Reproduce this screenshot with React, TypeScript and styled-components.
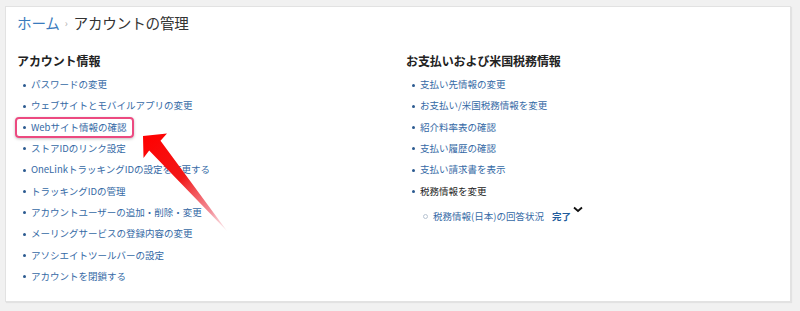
import React from "react";
import styled, { createGlobalStyle } from "styled-components";

const Global = createGlobalStyle`
  html, body { margin: 0; padding: 0; background: #f1f1f1; }
  body { font-family: "Noto Sans CJK JP", "Noto Sans", sans-serif; }
`;

const Page = styled.div`
  width: 800px;
  height: 311px;
  box-sizing: border-box;
  padding: 6px 9px 9px 5px;
`;

const Card = styled.div`
  position: relative;
  box-sizing: border-box;
  height: 296px;
  background: #fff;
  border: 1px solid #e2e2e2;
  box-shadow: 1px 1px 1px rgba(0, 0, 0, 0.06);
  padding: 6px 11px 0 11px;
`;

const Breadcrumb = styled.div`
  display: flex;
  align-items: center;
  height: 20px;
  font-size: 14.6px;
  line-height: 20px;
  letter-spacing: -0.2px;
`;

const Crumb = styled.span`
  color: #3a7bbd;
`;

const Sep = styled.span`
  color: #b0b0b0;
  font-size: 10px;
  margin: 0 6px 0 5px;
`;

const Title = styled.span`
  color: #333;
`;

const Columns = styled.div`
  display: grid;
  grid-template-columns: 389px 1fr;
  margin-top: 20px;
`;

const Column = styled.div`
  display: flex;
  flex-direction: column;
`;

const Heading = styled.h2`
  margin: 0 0 5px 0;
  font-size: 12px;
  line-height: 16px;
  font-weight: 700;
  color: #222;
  letter-spacing: -0.1px;
`;

const List = styled.ul`
  list-style: none;
  margin: 0;
  padding: 0;
`;

const Item = styled.li<{ $plain?: boolean }>`
  position: relative;
  display: flex;
  align-items: center;
  height: 21.33px;
  padding-left: 14px;
  font-size: 9.5px;
  line-height: 21.33px;
  color: ${(p) => (p.$plain ? "#222" : "#3469a5")};
  white-space: nowrap;
  &::before {
    content: "";
    position: absolute;
    left: 6px;
    top: 9.5px;
    width: 3px;
    height: 3px;
    border-radius: 50%;
    background: #2b5a90;
  }
`;

const SubList = styled.ul`
  list-style: none;
  margin: 3.7px 0 0 0;
  padding: 0;
`;

const SubItem = styled.li`
  position: relative;
  display: flex;
  align-items: center;
  height: 21.33px;
  padding-left: 27px;
  font-size: 9.5px;
  line-height: 21.33px;
  color: #3469a5;
  white-space: nowrap;
  &::before {
    content: "";
    position: absolute;
    left: 17px;
    top: 8.6px;
    width: 3px;
    height: 3px;
    border-radius: 50%;
    border: 0.8px solid #b8c4d2;
  }
`;

const Done = styled.span`
  font-weight: 700;
  color: #1f5c9c;
  margin-left: 8px;
`;

const Chevron = styled.svg`
  align-self: flex-start;
  margin-left: 2px;
`;

const Highlight = styled.span`
  position: absolute;
  left: -2px;
  top: 0px;
  width: 119px;
  height: 21px;
  box-sizing: border-box;
  border: 2px solid #ec4a80;
  border-radius: 4px;
  box-shadow: 0 1px 3px rgba(0, 0, 0, 0.25);
  pointer-events: none;
`;

const Arrow = styled.svg`
  position: absolute;
  left: 134px;
  top: 124px;
  overflow: visible;
  pointer-events: none;
`;

const leftItems = [
  "パスワードの変更",
  "ウェブサイトとモバイルアプリの変更",
  "Webサイト情報の確認",
  "ストアIDのリンク設定",
  "OneLinkトラッキングIDの設定を変更する",
  "トラッキングIDの管理",
  "アカウントユーザーの追加・削除・変更",
  "メーリングサービスの登録内容の変更",
  "アソシエイトツールバーの設定",
  "アカウントを閉鎖する",
];

const rightItems = [
  "支払い先情報の変更",
  "お支払い/米国税務情報を変更",
  "紹介料率表の確認",
  "支払い履歴の確認",
  "支払い請求書を表示",
];

export default function App() {
  return (
    <>
      <Global />
      <Page>
        <Card>
          <Breadcrumb>
            <Crumb>ホーム</Crumb>
            <Sep>›</Sep>
            <Title>アカウントの管理</Title>
          </Breadcrumb>
          <Columns>
            <Column>
              <Heading>アカウント情報</Heading>
              <List>
                {leftItems.map((t, i) => (
                  <Item key={t}>
                    {t}
                    {i === 2 && <Highlight />}
                  </Item>
                ))}
              </List>
            </Column>
            <Column>
              <Heading>お支払いおよび米国税務情報</Heading>
              <List>
                {rightItems.map((t) => (
                  <Item key={t}>{t}</Item>
                ))}
                <Item $plain>税務情報を変更</Item>
              </List>
              <SubList>
                <SubItem>
                  税務情報(日本)の回答状況
                  <Done>完了</Done>
                  <Chevron width="10" height="7" viewBox="0 0 10 7">
                    <path d="M1 1.5 L5 5 L9 1.5" fill="none" stroke="#111" strokeWidth="1.8" />
                  </Chevron>
                </SubItem>
              </SubList>
            </Column>
          </Columns>
          <Arrow width="95" height="110" viewBox="0 0 95 110">
            <defs>
              <linearGradient id="ag" x1="3" y1="5" x2="87" y2="100" gradientUnits="userSpaceOnUse">
                <stop offset="0" stopColor="#ff0000" />
                <stop offset="0.45" stopColor="#f21818" />
                <stop offset="0.8" stopColor="#ee6a78" stopOpacity="0.75" />
                <stop offset="1" stopColor="#f5b8c0" stopOpacity="0.3" />
              </linearGradient>
            </defs>
            <path
              d="M3 5 L27 2.5 L20.5 9.8 L87 100 L9.2 19.5 L3.5 27 Z"
              fill="url(#ag)"
            />
          </Arrow>
        </Card>
      </Page>
    </>
  );
}
